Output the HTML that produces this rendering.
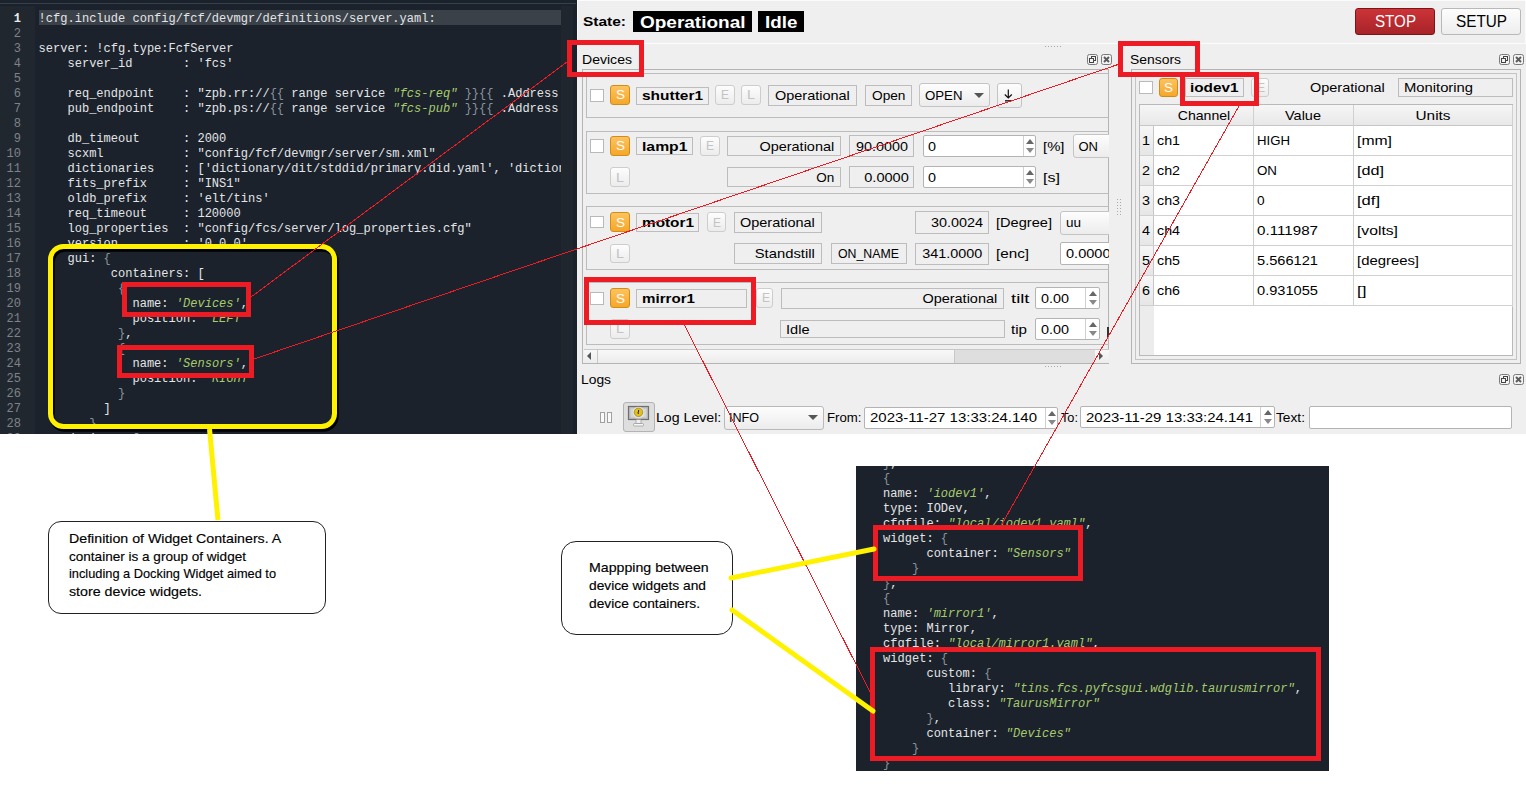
<!DOCTYPE html><html><head><meta charset="utf-8"><style>
html,body{margin:0;padding:0;}
body{width:1526px;height:811px;position:relative;overflow:hidden;background:#fff;font-family:"Liberation Sans", sans-serif;}
div{box-sizing:border-box;}
.code{position:absolute;margin:0;font-family:"Liberation Mono", monospace;font-size:12.04px;line-height:15px;white-space:pre;color:#e3e5e8;}
.p{color:#8a939c;}
.g{color:#a6cb6d;font-style:italic;}
.lbl{position:absolute;border:1px solid #bdbdbd;background:#efefef;}
.btn{position:absolute;border:1px solid #c4c4c4;border-radius:3px;background:linear-gradient(#fdfdfd,#ececec);}
.dis{border-color:#cdcdcd;}
.sbtn{position:absolute;border:1px solid #d08e17;border-radius:3px;background:linear-gradient(#fdc35f,#f5a72a);}
.chk{position:absolute;border:1px solid #b9b9b9;background:#fff;}
.inp{position:absolute;border:1px solid #b4b4b4;border-radius:2px;background:#fff;}
.grp{position:absolute;border:1px solid #bcbcbc;}
</style></head><body>
<div style="position:absolute;left:0px;top:0px;width:577px;height:434px;background:#1b222b;"></div>
<div style="position:absolute;left:0px;top:3px;width:576px;height:1px;background:#34404a;"></div>
<div style="position:absolute;left:0px;top:6px;width:35px;height:428px;background:#21272f;"></div>
<div style="position:absolute;left:561px;top:6px;width:12px;height:428px;background:#20262e;"></div>
<div style="position:absolute;left:39px;top:10px;width:522px;height:15px;background:#3b4148;"></div>
<div style="position:absolute;left:0;top:0;width:35px;height:434px;overflow:hidden;">
<pre class="code" style="left:0;top:12.3px;width:21px;text-align:right;color:#7d838a;"><span style="color:#e8eaec;font-weight:bold;">1</span>
2
3
4
5
6
7
8
9
10
11
12
13
14
15
16
17
18
19
20
21
22
23
24
25
26
27
28
29</pre>
</div>
<div style="position:absolute;left:0;top:0;width:561px;height:434px;overflow:hidden;">
<pre class="code" style="left:38.6px;top:12.3px;">!cfg.include config/fcf/devmgr/definitions/server.yaml:

server: !cfg.type:FcfServer
    server_id       : 'fcs'

    req_endpoint    : "zpb.rr://<span class="p">{{</span> range service <span class="g">"fcs-req"</span> <span class="p">}}{{</span> .Address }}
    pub_endpoint    : "zpb.ps://<span class="p">{{</span> range service <span class="g">"fcs-pub"</span> <span class="p">}}{{</span> .Address }}

    db_timeout      : 2000
    scxml           : "config/fcf/devmgr/server/sm.xml"
    dictionaries    : ['dictionary/dit/stddid/primary.did.yaml', 'dictionary/x']
    fits_prefix     : "INS1"
    oldb_prefix     : 'elt/tins'
    req_timeout     : 120000
    log_properties  : "config/fcs/server/log_properties.cfg"
    version         : '0.0.0'
    gui: <span class="p">{</span>
          containers: [
           <span class="p">{</span>
             name: <span class="g">'Devices'</span>,
             position: <span class="g">'LEFT'</span>
           <span class="p">}</span>,
           <span class="p">{</span>
             name: <span class="g">'Sensors'</span>,
             position: <span class="g">'RIGHT'</span>
           <span class="p">}</span>
         ]
       <span class="p">}</span>
    devices: <span class="p">[</span></pre>
</div>
<div style="position:absolute;left:856px;top:466px;width:473px;height:305px;overflow:hidden;background:#1b222b;">
<pre class="code" style="left:27.1px;top:-9.2px;"><span class="p">}</span>,
<span class="p">{</span>
name: <span class="g">'iodev1'</span>,
type: IODev,
cfgfile: <span class="g">"local/iodev1.yaml"</span>,
widget: <span class="p">{</span>
      container: <span class="g">"Sensors"</span>
    <span class="p">}</span>
<span class="p">}</span>,
<span class="p">{</span>
name: <span class="g">'mirror1'</span>,
type: Mirror,
cfgfile: <span class="g">"local/mirror1.yaml"</span>,
widget: <span class="p">{</span>
      custom: <span class="p">{</span>
         library: <span class="g">"tins.fcs.pyfcsgui.wdglib.taurusmirror"</span>,
         class: <span class="g">"TaurusMirror"</span>
      <span class="p">}</span>,
      container: <span class="g">"Devices"</span>
    <span class="p">}</span>
<span class="p">}</span></pre>
</div>
<div style="position:absolute;left:577px;top:0px;width:949px;height:434px;background:#efefef;"></div>
<div style="position:absolute;left:577px;top:0px;width:949px;height:1px;background:#fbfbfb;"></div>
<div style="position:absolute;left:577px;top:0px;width:1px;height:43px;background:#fbfbfb;"></div>
<div style="position:absolute;left:1525px;top:0px;width:1px;height:43px;background:#fbfbfb;"></div>
<div style="position:absolute;left:577px;top:43px;width:949px;height:1px;background:#fbfbfb;"></div>
<div class="" style="position: absolute; left: 582.5px; top: 15.09px; font-size: 13px; line-height: 13px; white-space: pre; transform-origin: left 50%; font-weight: bold; color: rgb(0, 0, 0); transform: scaleX(1.1903);">State:</div>
<div style="position:absolute;left:633px;top:11px;width:119px;height:21px;background:#000;"></div>
<div class="" style="position: absolute; left: 639.7px; top: 14.21px; font-size: 17px; line-height: 17px; white-space: pre; transform-origin: left 50%; font-weight: bold; color: rgb(255, 255, 255); transform: scaleX(1.1168);">Operational</div>
<div style="position:absolute;left:758px;top:11px;width:46px;height:21px;background:#000;"></div>
<div class="" style="position: absolute; left: 764.8px; top: 14.21px; font-size: 17px; line-height: 17px; white-space: pre; transform-origin: left 50%; font-weight: bold; color: rgb(255, 255, 255); transform: scaleX(1.1059);">Idle</div>
<div style="position:absolute;left:1355px;top:8px;width:80px;height:27px;border:1px solid #7d1418;border-radius:3px;background:linear-gradient(#cc3438,#a82328);"></div>
<div class="" style="position: absolute; left: 1374.5px; top: 13.23px; font-size: 16.5px; line-height: 16.5px; white-space: pre; transform-origin: left 50%; color: rgb(255, 255, 255); transform: scaleX(0.9184);">STOP</div>
<div style="position:absolute;left:1441px;top:8px;width:80px;height:27px;border:1px solid #b8b8b8;border-radius:3px;background:linear-gradient(#fdfdfd,#ededed);"></div>
<div class="" style="position: absolute; left: 1455.6px; top: 13.23px; font-size: 16.5px; line-height: 16.5px; white-space: pre; transform-origin: left 50%; color: rgb(0, 0, 0); transform: scaleX(0.927);">SETUP</div>
<div class="" style="position: absolute; left: 581.5px; top: 52.59px; font-size: 13px; line-height: 13px; white-space: pre; transform-origin: left 50%; color: rgb(0, 0, 0); transform: scaleX(1.0811);">Devices</div>
<svg width="40" height="16" style="position:absolute;left:1085px;top:52px;"><rect x="2.5" y="2.5" width="10" height="10" rx="2" fill="#f2f2f2" stroke="#7a7a7a" stroke-width="1"></rect><rect x="16.5" y="2.5" width="10" height="10" rx="2" fill="#f2f2f2" stroke="#7a7a7a" stroke-width="1"></rect><rect x="6.5" y="4.5" width="4" height="4" fill="none" stroke="#444" stroke-width="1"></rect><rect x="4.5" y="6.5" width="4" height="4" fill="#f2f2f2" stroke="#444" stroke-width="1"></rect><path d="M19,5 L24,10 M24,5 L19,10" stroke="#5a5a5a" stroke-width="1.9"></path></svg>
<div class="" style="position: absolute; left: 1130.3px; top: 53.49px; font-size: 13px; line-height: 13px; white-space: pre; transform-origin: left 50%; color: rgb(0, 0, 0); transform: scaleX(1.0691);">Sensors</div>
<svg width="40" height="16" style="position:absolute;left:1497px;top:52px;"><rect x="2.5" y="2.5" width="10" height="10" rx="2" fill="#f2f2f2" stroke="#7a7a7a" stroke-width="1"></rect><rect x="16.5" y="2.5" width="10" height="10" rx="2" fill="#f2f2f2" stroke="#7a7a7a" stroke-width="1"></rect><rect x="6.5" y="4.5" width="4" height="4" fill="none" stroke="#444" stroke-width="1"></rect><rect x="4.5" y="6.5" width="4" height="4" fill="#f2f2f2" stroke="#444" stroke-width="1"></rect><path d="M19,5 L24,10 M24,5 L19,10" stroke="#5a5a5a" stroke-width="1.9"></path></svg>
<div class="" style="position: absolute; left: 580.8px; top: 373.29px; font-size: 13px; line-height: 13px; white-space: pre; transform-origin: left 50%; color: rgb(0, 0, 0); transform: scaleX(1.0637);">Logs</div>
<svg width="40" height="16" style="position:absolute;left:1497px;top:372px;"><rect x="2.5" y="2.5" width="10" height="10" rx="2" fill="#f2f2f2" stroke="#7a7a7a" stroke-width="1"></rect><rect x="16.5" y="2.5" width="10" height="10" rx="2" fill="#f2f2f2" stroke="#7a7a7a" stroke-width="1"></rect><rect x="6.5" y="4.5" width="4" height="4" fill="none" stroke="#444" stroke-width="1"></rect><rect x="4.5" y="6.5" width="4" height="4" fill="#f2f2f2" stroke="#444" stroke-width="1"></rect><path d="M19,5 L24,10 M24,5 L19,10" stroke="#5a5a5a" stroke-width="1.9"></path></svg>
<div style="position:absolute;left:1045px;top:46px;width:1px;height:1px;background:#a8a8a8;"></div>
<div style="position:absolute;left:1048px;top:46px;width:1px;height:1px;background:#a8a8a8;"></div>
<div style="position:absolute;left:1051px;top:46px;width:1px;height:1px;background:#a8a8a8;"></div>
<div style="position:absolute;left:1054px;top:46px;width:1px;height:1px;background:#a8a8a8;"></div>
<div style="position:absolute;left:1057px;top:46px;width:1px;height:1px;background:#a8a8a8;"></div>
<div style="position:absolute;left:1060px;top:46px;width:1px;height:1px;background:#a8a8a8;"></div>
<div style="position:absolute;left:1045px;top:366px;width:1px;height:1px;background:#a8a8a8;"></div>
<div style="position:absolute;left:1048px;top:366px;width:1px;height:1px;background:#a8a8a8;"></div>
<div style="position:absolute;left:1051px;top:366px;width:1px;height:1px;background:#a8a8a8;"></div>
<div style="position:absolute;left:1054px;top:366px;width:1px;height:1px;background:#a8a8a8;"></div>
<div style="position:absolute;left:1057px;top:366px;width:1px;height:1px;background:#a8a8a8;"></div>
<div style="position:absolute;left:1060px;top:366px;width:1px;height:1px;background:#a8a8a8;"></div>
<div style="position:absolute;left:1117px;top:199px;width:1px;height:1px;background:#a8a8a8;"></div>
<div style="position:absolute;left:1120px;top:199px;width:1px;height:1px;background:#a8a8a8;"></div>
<div style="position:absolute;left:1117px;top:202px;width:1px;height:1px;background:#a8a8a8;"></div>
<div style="position:absolute;left:1120px;top:202px;width:1px;height:1px;background:#a8a8a8;"></div>
<div style="position:absolute;left:1117px;top:205px;width:1px;height:1px;background:#a8a8a8;"></div>
<div style="position:absolute;left:1120px;top:205px;width:1px;height:1px;background:#a8a8a8;"></div>
<div style="position:absolute;left:1117px;top:208px;width:1px;height:1px;background:#a8a8a8;"></div>
<div style="position:absolute;left:1120px;top:208px;width:1px;height:1px;background:#a8a8a8;"></div>
<div style="position:absolute;left:1117px;top:211px;width:1px;height:1px;background:#a8a8a8;"></div>
<div style="position:absolute;left:1120px;top:211px;width:1px;height:1px;background:#a8a8a8;"></div>
<div style="position:absolute;left:1117px;top:214px;width:1px;height:1px;background:#a8a8a8;"></div>
<div style="position:absolute;left:1120px;top:214px;width:1px;height:1px;background:#a8a8a8;"></div>
<div style="position:absolute;left:582px;top:69px;width:527px;height:295px;border:1px solid #b4b4b4;"></div>
<div style="position:absolute;left:583.5px;top:70.5px;width:525px;height:278px;overflow:hidden;">
<div class="grp" style="left:2.5px;top:2.5px;width:540.0px;height:45.0px;"></div>
<div class="grp" style="left:2.5px;top:60.1px;width:540.0px;height:63.4px;"></div>
<div class="grp" style="left:2.5px;top:135.5px;width:540.0px;height:63.5px;"></div>
<div class="grp" style="left:2.5px;top:211.9px;width:540.0px;height:62.9px;"></div>
<div class="chk" style="left:6.9px;top:18.0px;width:13.4px;height:13.1px;"></div>
<div class="sbtn" style="left:26.5px;top:14.5px;width:20.0px;height:20.0px;"></div>
<div class="" style="position: absolute; left: 32px; top: 17.99px; font-size: 13px; line-height: 13px; white-space: pre; transform-origin: left 50%; color: rgb(255, 255, 255); transform: scaleX(1.0378);">S</div>
<div class="lbl" style="left:52.8px;top:16.1px;width:72.4px;height:18.0px;"></div>
<div class="" style="position: absolute; left: 58px; top: 18.79px; font-size: 13px; line-height: 13px; white-space: pre; transform-origin: left 50%; font-weight: bold; transform: scaleX(1.1892);">shutter1</div>
<div class="btn dis" style="left:131.9px;top:14.7px;width:19.5px;height:19.6px;"></div>
<div class="" style="position: absolute; left: 137.9px; top: 17.99px; font-size: 13px; line-height: 13px; white-space: pre; transform-origin: left 50%; color: rgb(195, 195, 195); transform: scaleX(0.9225);">E</div>
<div class="btn dis" style="left:157.6px;top:14.7px;width:19.5px;height:19.6px;"></div>
<div class="" style="position: absolute; left: 163.6px; top: 17.99px; font-size: 13px; line-height: 13px; white-space: pre; transform-origin: left 50%; color: rgb(195, 195, 195); transform: scaleX(1.1058);">L</div>
<div class="lbl" style="left:184.7px;top:14.0px;width:88.6px;height:21.2px;"></div>
<div class="" style="position: absolute; left: 191.5px; top: 18.79px; font-size: 13px; line-height: 13px; white-space: pre; transform-origin: left 50%; transform: scaleX(1.1128);">Operational</div>
<div class="lbl" style="left:281.8px;top:14.0px;width:46.5px;height:21.2px;"></div>
<div class="" style="position: absolute; left: 288px; top: 18.79px; font-size: 13px; line-height: 13px; white-space: pre; transform-origin: left 50%; transform: scaleX(1.053);">Open</div>
<div class="btn" style="left:335.9px;top:12.5px;width:71.0px;height:24.4px;"></div>
<div class="" style="position: absolute; left: 341px; top: 18.79px; font-size: 13px; line-height: 13px; white-space: pre; transform-origin: left 50%; transform: scaleX(1.0178);">OPEN</div>
<div style="position:absolute;left:390.1px;top:22.0px;width:0;height:0;border-left:5px solid transparent;border-right:5px solid transparent;border-top:5px solid #555;"></div>
<div class="btn" style="left:413.9px;top:12.8px;width:24.3px;height:24.4px;"></div>
<svg width="14" height="16" style="position:absolute;left:417.5px;top:17.5px;"><path d="M7.3,1.5 V10 M3.8,6.5 L7.3,10 L10.8,6.5" stroke="#111" stroke-width="1.2" fill="none"></path><rect x="4" y="12" width="6.5" height="1.6" fill="#333"></rect></svg>
<div class="chk" style="left:6.9px;top:68.8px;width:13.4px;height:13.4px;"></div>
<div class="sbtn" style="left:26.5px;top:65.5px;width:20.0px;height:20.0px;"></div>
<div class="" style="position: absolute; left: 32px; top: 68.99px; font-size: 13px; line-height: 13px; white-space: pre; transform-origin: left 50%; color: rgb(255, 255, 255); transform: scaleX(1.0378);">S</div>
<div class="lbl" style="left:52.8px;top:66.9px;width:57.1px;height:18.0px;"></div>
<div class="" style="position: absolute; left: 58px; top: 69.79px; font-size: 13px; line-height: 13px; white-space: pre; transform-origin: left 50%; font-weight: bold; transform: scaleX(1.2108);">lamp1</div>
<div class="btn dis" style="left:116.9px;top:65.5px;width:19.5px;height:19.6px;"></div>
<div class="" style="position: absolute; left: 122.9px; top: 68.79px; font-size: 13px; line-height: 13px; white-space: pre; transform-origin: left 50%; color: rgb(195, 195, 195); transform: scaleX(0.9225);">E</div>
<div class="lbl" style="left:143.9px;top:65.5px;width:113.2px;height:20.3px;"></div>
<div class="" style="position: absolute; right: 274.2px; top: 69.79px; font-size: 13px; line-height: 13px; white-space: pre; transform-origin: right 50%; transform: scaleX(1.1128);">Operational</div>
<div class="lbl" style="left:265.7px;top:64.7px;width:65.1px;height:22.0px;"></div>
<div class="" style="position: absolute; right: 200.2px; top: 69.79px; font-size: 13px; line-height: 13px; white-space: pre; transform-origin: right 50%; transform: scaleX(1.1064);">90.0000</div>
<div class="inp" style="left:339.1px;top:64.7px;width:113.7px;height:22.0px;"></div>
<div class="" style="position: absolute; left: 344px; top: 69.79px; font-size: 13px; line-height: 13px; white-space: pre; transform-origin: left 50%; transform: scaleX(1.1058);">0</div>
<div class="" style="left:439.1px;top:65.7px;width:1.0px;height:20.0px;position:absolute;background:#d0d0d0;"></div>
<div class="btn" style="left:489.2px;top:63.8px;width:60.0px;height:23.9px;"></div>
<div class="" style="position: absolute; left: 495px; top: 69.79px; font-size: 13px; line-height: 13px; white-space: pre; transform-origin: left 50%; transform: scaleX(1);">ON</div>
<div class="" style="position: absolute; left: 459.8px; top: 69.79px; font-size: 13px; line-height: 13px; white-space: pre; transform-origin: left 50%; transform: scaleX(1.1438);">[%]</div>
<div class="btn dis" style="left:26.5px;top:96.8px;width:19.5px;height:19.6px;"></div>
<div class="" style="position: absolute; left: 32.5px; top: 100.09px; font-size: 13px; line-height: 13px; white-space: pre; transform-origin: left 50%; color: rgb(195, 195, 195); transform: scaleX(1.1058);">L</div>
<div class="lbl" style="left:143.9px;top:96.8px;width:113.2px;height:20.2px;"></div>
<div class="" style="position: absolute; right: 274.2px; top: 100.79px; font-size: 13px; line-height: 13px; white-space: pre; transform-origin: right 50%; transform: scaleX(1.0378);">On</div>
<div class="lbl" style="left:265.7px;top:95.9px;width:65.1px;height:22.0px;"></div>
<div class="" style="position: absolute; right: 200.2px; top: 100.79px; font-size: 13px; line-height: 13px; white-space: pre; transform-origin: right 50%; transform: scaleX(1.1191);">0.0000</div>
<div class="inp" style="left:339.1px;top:95.9px;width:113.7px;height:22.0px;"></div>
<div class="" style="position: absolute; left: 344px; top: 100.79px; font-size: 13px; line-height: 13px; white-space: pre; transform-origin: left 50%; transform: scaleX(1.1058);">0</div>
<div class="" style="left:439.1px;top:96.9px;width:1.0px;height:20.0px;position:absolute;background:#d0d0d0;"></div>
<div class="" style="position: absolute; left: 459.8px; top: 100.79px; font-size: 13px; line-height: 13px; white-space: pre; transform-origin: left 50%; transform: scaleX(1.2378);">[s]</div>
<div class="chk" style="left:6.9px;top:145.0px;width:13.4px;height:12.9px;"></div>
<div class="sbtn" style="left:26.5px;top:141.8px;width:20.0px;height:20.0px;"></div>
<div class="" style="position: absolute; left: 32px; top: 145.29px; font-size: 13px; line-height: 13px; white-space: pre; transform-origin: left 50%; color: rgb(255, 255, 255); transform: scaleX(1.0378);">S</div>
<div class="lbl" style="left:52.9px;top:142.8px;width:63.0px;height:18.4px;"></div>
<div class="" style="position: absolute; left: 58px; top: 145.79px; font-size: 13px; line-height: 13px; white-space: pre; transform-origin: left 50%; font-weight: bold; transform: scaleX(1.1801);">motor1</div>
<div class="btn dis" style="left:123.0px;top:141.8px;width:19.5px;height:19.6px;"></div>
<div class="" style="position: absolute; left: 129px; top: 145.09px; font-size: 13px; line-height: 13px; white-space: pre; transform-origin: left 50%; color: rgb(195, 195, 195); transform: scaleX(0.9225);">E</div>
<div class="lbl" style="left:150.0px;top:141.8px;width:88.0px;height:20.4px;"></div>
<div class="" style="position: absolute; left: 156.5px; top: 145.79px; font-size: 13px; line-height: 13px; white-space: pre; transform-origin: left 50%; transform: scaleX(1.1128);">Operational</div>
<div class="lbl" style="left:331.6px;top:140.7px;width:73.8px;height:22.6px;"></div>
<div class="" style="position: absolute; right: 126px; top: 145.79px; font-size: 13px; line-height: 13px; white-space: pre; transform-origin: right 50%; transform: scaleX(1.1064);">30.0024</div>
<div class="" style="position: absolute; left: 412.3px; top: 145.79px; font-size: 13px; line-height: 13px; white-space: pre; transform-origin: left 50%; transform: scaleX(1.1228);">[Degree]</div>
<div class="btn" style="left:476.6px;top:140.0px;width:60.0px;height:24.0px;"></div>
<div class="" style="position: absolute; left: 482px; top: 145.79px; font-size: 13px; line-height: 13px; white-space: pre; transform-origin: left 50%; transform: scaleX(1.0367);">uu</div>
<div class="btn dis" style="left:26.5px;top:173.0px;width:19.5px;height:19.6px;"></div>
<div class="" style="position: absolute; left: 32.5px; top: 176.29px; font-size: 13px; line-height: 13px; white-space: pre; transform-origin: left 50%; color: rgb(195, 195, 195); transform: scaleX(1.1058);">L</div>
<div class="lbl" style="left:150.0px;top:172.6px;width:88.0px;height:20.5px;"></div>
<div class="" style="position: absolute; right: 293.5px; top: 176.79px; font-size: 13px; line-height: 13px; white-space: pre; transform-origin: right 50%; transform: scaleX(1.1374);">Standstill</div>
<div class="lbl" style="left:247.0px;top:172.6px;width:76.0px;height:20.5px;"></div>
<div class="" style="position: absolute; left: 254.5px; top: 176.79px; font-size: 13px; line-height: 13px; white-space: pre; transform-origin: left 50%; transform: scaleX(0.9487);">ON_NAME</div>
<div class="lbl" style="left:331.6px;top:172.0px;width:73.8px;height:22.0px;"></div>
<div class="" style="position: absolute; right: 126px; top: 176.79px; font-size: 13px; line-height: 13px; white-space: pre; transform-origin: right 50%; transform: scaleX(1.1063);">341.0000</div>
<div class="" style="position: absolute; left: 412.3px; top: 176.79px; font-size: 13px; line-height: 13px; white-space: pre; transform-origin: left 50%; transform: scaleX(1.1707);">[enc]</div>
<div class="inp" style="left:476.5px;top:171.5px;width:60.0px;height:22.5px;"></div>
<div class="" style="position: absolute; left: 482px; top: 176.79px; font-size: 13px; line-height: 13px; white-space: pre; transform-origin: left 50%; transform: scaleX(1.1191);">0.0000</div>
<div class="chk" style="left:6.9px;top:221.5px;width:13.4px;height:12.6px;"></div>
<div class="sbtn" style="left:26.5px;top:217.7px;width:20.0px;height:20.0px;"></div>
<div class="" style="position: absolute; left: 32px; top: 221.19px; font-size: 13px; line-height: 13px; white-space: pre; transform-origin: left 50%; color: rgb(255, 255, 255); transform: scaleX(1.0378);">S</div>
<div class="lbl" style="left:52.9px;top:218.8px;width:111.1px;height:18.3px;"></div>
<div class="" style="position: absolute; left: 58px; top: 221.79px; font-size: 13px; line-height: 13px; white-space: pre; transform-origin: left 50%; font-weight: bold; transform: scaleX(1.164);">mirror1</div>
<div class="btn dis" style="left:172.6px;top:217.7px;width:17.3px;height:19.6px;"></div>
<div class="" style="position: absolute; left: 178.6px; top: 220.99px; font-size: 13px; line-height: 13px; white-space: pre; transform-origin: left 50%; color: rgb(195, 195, 195); transform: scaleX(0.9225);">E</div>
<div class="lbl" style="left:197.4px;top:217.7px;width:222.7px;height:20.5px;"></div>
<div class="" style="position: absolute; right: 111.5px; top: 221.79px; font-size: 13px; line-height: 13px; white-space: pre; transform-origin: right 50%; transform: scaleX(1.1128);">Operational</div>
<div class="" style="position: absolute; left: 427.6px; top: 221.79px; font-size: 13px; line-height: 13px; white-space: pre; transform-origin: left 50%; transform: scaleX(1.4231);">tilt</div>
<div class="inp" style="left:451.8px;top:216.9px;width:64.3px;height:22.0px;"></div>
<div class="" style="position: absolute; left: 457px; top: 221.79px; font-size: 13px; line-height: 13px; white-space: pre; transform-origin: left 50%; transform: scaleX(1.1062);">0.00</div>
<div class="" style="left:501.9px;top:217.9px;width:1.0px;height:20.0px;position:absolute;background:#d0d0d0;"></div>
<div class="btn dis" style="left:26.5px;top:248.5px;width:19.5px;height:19.6px;"></div>
<div class="" style="position: absolute; left: 32.5px; top: 251.79px; font-size: 13px; line-height: 13px; white-space: pre; transform-origin: left 50%; color: rgb(195, 195, 195); transform: scaleX(1.1058);">L</div>
<div class="lbl" style="left:196.8px;top:249.6px;width:224.4px;height:18.3px;"></div>
<div class="" style="position: absolute; left: 202.5px; top: 252.79px; font-size: 13px; line-height: 13px; white-space: pre; transform-origin: left 50%; transform: scaleX(1.1207);">Idle</div>
<div class="" style="position: absolute; left: 427.6px; top: 252.79px; font-size: 13px; line-height: 13px; white-space: pre; transform-origin: left 50%; transform: scaleX(1.165);">tip</div>
<div class="inp" style="left:451.8px;top:247.9px;width:64.3px;height:21.8px;"></div>
<div class="" style="position: absolute; left: 457px; top: 252.79px; font-size: 13px; line-height: 13px; white-space: pre; transform-origin: left 50%; transform: scaleX(1.1062);">0.00</div>
<div class="" style="left:501.9px;top:248.9px;width:1.0px;height:20.0px;position:absolute;background:#d0d0d0;"></div>
<div class="" style="left:523.5px;top:256.5px;width:2.0px;height:9.5px;position:absolute;background:#333;"></div>
</div>
<div style="position:absolute;left:583.5px;top:349px;width:525px;height:14.3px;background:linear-gradient(#f8f8f8,#ececec);border-top:1px solid #c8c8c8;"></div>
<div style="position:absolute;left:596.5px;top:349px;width:1px;height:14.3px;background:#c8c8c8;"></div>
<div style="position:absolute;left:954.4px;top:350px;width:140.2px;height:13.3px;background:#dedede;border-left:1px solid #c8c8c8;"></div>
<div style="position:absolute;left:587px;top:352px;width:0;height:0;border-top:4px solid transparent;border-bottom:4px solid transparent;border-right:4px solid #555;"></div>
<div style="position:absolute;left:1099px;top:352px;width:0;height:0;border-top:4px solid transparent;border-bottom:4px solid transparent;border-left:4px solid #555;"></div>
<div style="position:absolute;left:1131px;top:69px;width:390px;height:295px;border:1px solid #b4b4b4;"></div>
<div style="position:absolute;left:1135px;top:73px;width:382px;height:287px;border:1px solid #c4c4c4;"></div>
<div style="position:absolute;left:1139.1px;top:81px;width:13.8px;height:12.6px;border:1px solid #b9b9b9;background:#fff;"></div>
<div style="position:absolute;left:1159px;top:78.3px;width:19.1px;height:19.2px;border:1px solid #d08e17;border-radius:3px;background:linear-gradient(#fdc35f,#f5a72a);"></div>
<div class="" style="position: absolute; left: 1164px; top: 81.29px; font-size: 13px; line-height: 13px; white-space: pre; transform-origin: left 50%; color: rgb(255, 255, 255); transform: scaleX(1.0378);">S</div>
<div style="position:absolute;left:1185px;top:78px;width:58.6px;height:18.6px;border:1px solid #bdbdbd;background:#efefef;"></div>
<div class="" style="position: absolute; left: 1190px; top: 81.29px; font-size: 13px; line-height: 13px; white-space: pre; transform-origin: left 50%; font-weight: bold; transform: scaleX(1.1775);">iodev1</div>
<div style="position:absolute;left:1250.5px;top:77.5px;width:18.3px;height:19.1px;border:1px solid #cdcdcd;border-radius:3px;background:linear-gradient(#fdfdfd,#ececec);"></div>
<div class="" style="position: absolute; left: 1256.5px; top: 81.29px; font-size: 13px; line-height: 13px; white-space: pre; transform-origin: left 50%; color: rgb(195, 195, 195); transform: scaleX(0.9225);">E</div>
<div class="" style="position: absolute; left: 1310px; top: 81.29px; font-size: 13px; line-height: 13px; white-space: pre; transform-origin: left 50%; transform: scaleX(1.1128);">Operational</div>
<div style="position:absolute;left:1398.3px;top:78.3px;width:114.3px;height:18.4px;border:1px solid #bdbdbd;background:#efefef;"></div>
<div class="" style="position: absolute; left: 1403.5px; top: 81.29px; font-size: 13px; line-height: 13px; white-space: pre; transform-origin: left 50%; transform: scaleX(1.1367);">Monitoring</div>
<div style="position:absolute;left:1139px;top:104px;width:373.5999999999999px;height:252px;border:1px solid #b9b9b9;background:#fff;"></div>
<div style="position:absolute;left:1140px;top:105px;width:371.5999999999999px;height:21px;background:linear-gradient(#f6f6f6,#e8e8e8);border-bottom:1px solid #c6c6c6;"></div>
<div style="position:absolute;left:1140px;top:126px;width:13.599999999999909px;height:229px;background:#ececec;"></div>
<div style="position:absolute;left:1253.4px;top:105px;width:1px;height:200.8px;background:#d0d0d0;"></div>
<div style="position:absolute;left:1353.2px;top:105px;width:1px;height:200.8px;background:#d0d0d0;"></div>
<div style="position:absolute;left:1153px;top:126px;width:1px;height:180px;background:#c6c6c6;"></div>
<div style="position:absolute;left:1511.6px;top:105px;width:1px;height:201.8px;background:#d0d0d0;"></div>
<div class="" style="position: absolute; left: 1144px; top: 109.29px; width: 120px; text-align: center; font-size: 13px; line-height: 13px; white-space: pre; transform-origin: center 50%; transform: scaleX(1.0839);"><span>Channel</span></div>
<div class="" style="position: absolute; left: 1243.3px; top: 109.29px; width: 120px; text-align: center; font-size: 13px; line-height: 13px; white-space: pre; transform-origin: center 50%; transform: scaleX(1.1147);"><span>Value</span></div>
<div class="" style="position: absolute; left: 1372.9px; top: 109.29px; width: 120px; text-align: center; font-size: 13px; line-height: 13px; white-space: pre; transform-origin: center 50%; transform: scaleX(1.1814);"><span>Units</span></div>
<div style="position:absolute;left:1140px;top:155px;width:371.5999999999999px;height:1px;background:#d0d0d0;"></div>
<div style="position:absolute;left:1140px;top:126px;width:13px;height:29px;background:linear-gradient(#f6f6f6,#e6e6e6);"></div>
<div class="" style="position: absolute; left: 1142px; top: 134.49px; font-size: 13px; line-height: 13px; white-space: pre; transform-origin: left 50%; transform: scaleX(1.1058);">1</div>
<div class="" style="position: absolute; left: 1157px; top: 134.49px; font-size: 13px; line-height: 13px; white-space: pre; transform-origin: left 50%; transform: scaleX(1.0969);">ch1</div>
<div class="" style="position: absolute; left: 1257px; top: 134.49px; font-size: 13px; line-height: 13px; white-space: pre; transform-origin: left 50%; transform: scaleX(1.0154);">HIGH</div>
<div class="" style="position: absolute; left: 1357px; top: 134.49px; font-size: 13px; line-height: 13px; white-space: pre; transform-origin: left 50%; transform: scaleX(1.2115);">[mm]</div>
<div style="position:absolute;left:1140px;top:185px;width:371.5999999999999px;height:1px;background:#d0d0d0;"></div>
<div style="position:absolute;left:1140px;top:156px;width:13px;height:29px;background:linear-gradient(#f6f6f6,#e6e6e6);"></div>
<div class="" style="position: absolute; left: 1142px; top: 164.49px; font-size: 13px; line-height: 13px; white-space: pre; transform-origin: left 50%; transform: scaleX(1.1058);">2</div>
<div class="" style="position: absolute; left: 1157px; top: 164.49px; font-size: 13px; line-height: 13px; white-space: pre; transform-origin: left 50%; transform: scaleX(1.0969);">ch2</div>
<div class="" style="position: absolute; left: 1257px; top: 164.49px; font-size: 13px; line-height: 13px; white-space: pre; transform-origin: left 50%; transform: scaleX(1.0256);">ON</div>
<div class="" style="position: absolute; left: 1357px; top: 164.49px; font-size: 13px; line-height: 13px; white-space: pre; transform-origin: left 50%; transform: scaleX(1.245);">[dd]</div>
<div style="position:absolute;left:1140px;top:215px;width:371.5999999999999px;height:1px;background:#d0d0d0;"></div>
<div style="position:absolute;left:1140px;top:186px;width:13px;height:29px;background:linear-gradient(#f6f6f6,#e6e6e6);"></div>
<div class="" style="position: absolute; left: 1142px; top: 194.49px; font-size: 13px; line-height: 13px; white-space: pre; transform-origin: left 50%; transform: scaleX(1.1058);">3</div>
<div class="" style="position: absolute; left: 1157px; top: 194.49px; font-size: 13px; line-height: 13px; white-space: pre; transform-origin: left 50%; transform: scaleX(1.0969);">ch3</div>
<div class="" style="position: absolute; left: 1257px; top: 194.49px; font-size: 13px; line-height: 13px; white-space: pre; transform-origin: left 50%; transform: scaleX(1.0505);">0</div>
<div class="" style="position: absolute; left: 1357px; top: 194.49px; font-size: 13px; line-height: 13px; white-space: pre; transform-origin: left 50%; transform: scaleX(1.2723);">[df]</div>
<div style="position:absolute;left:1140px;top:245px;width:371.5999999999999px;height:1px;background:#d0d0d0;"></div>
<div style="position:absolute;left:1140px;top:216px;width:13px;height:29px;background:linear-gradient(#f6f6f6,#e6e6e6);"></div>
<div class="" style="position: absolute; left: 1142px; top: 224.49px; font-size: 13px; line-height: 13px; white-space: pre; transform-origin: left 50%; transform: scaleX(1.1058);">4</div>
<div class="" style="position: absolute; left: 1157px; top: 224.49px; font-size: 13px; line-height: 13px; white-space: pre; transform-origin: left 50%; transform: scaleX(1.0969);">ch4</div>
<div class="" style="position: absolute; left: 1257px; top: 224.49px; font-size: 13px; line-height: 13px; white-space: pre; transform-origin: left 50%; transform: scaleX(1.1664);">0.111987</div>
<div class="" style="position: absolute; left: 1357px; top: 224.49px; font-size: 13px; line-height: 13px; white-space: pre; transform-origin: left 50%; transform: scaleX(1.207);">[volts]</div>
<div style="position:absolute;left:1140px;top:275px;width:371.5999999999999px;height:1px;background:#d0d0d0;"></div>
<div style="position:absolute;left:1140px;top:246px;width:13px;height:29px;background:linear-gradient(#f6f6f6,#e6e6e6);"></div>
<div class="" style="position: absolute; left: 1142px; top: 254.49px; font-size: 13px; line-height: 13px; white-space: pre; transform-origin: left 50%; transform: scaleX(1.1058);">5</div>
<div class="" style="position: absolute; left: 1157px; top: 254.49px; font-size: 13px; line-height: 13px; white-space: pre; transform-origin: left 50%; transform: scaleX(1.0969);">ch5</div>
<div class="" style="position: absolute; left: 1257px; top: 254.49px; font-size: 13px; line-height: 13px; white-space: pre; transform-origin: left 50%; transform: scaleX(1.1247);">5.566121</div>
<div class="" style="position: absolute; left: 1357px; top: 254.49px; font-size: 13px; line-height: 13px; white-space: pre; transform-origin: left 50%; transform: scaleX(1.1438);">[degrees]</div>
<div style="position:absolute;left:1140px;top:305px;width:371.5999999999999px;height:1px;background:#d0d0d0;"></div>
<div style="position:absolute;left:1140px;top:276px;width:13px;height:29px;background:linear-gradient(#f6f6f6,#e6e6e6);"></div>
<div class="" style="position: absolute; left: 1142px; top: 284.49px; font-size: 13px; line-height: 13px; white-space: pre; transform-origin: left 50%; transform: scaleX(1.1058);">6</div>
<div class="" style="position: absolute; left: 1157px; top: 284.49px; font-size: 13px; line-height: 13px; white-space: pre; transform-origin: left 50%; transform: scaleX(1.0969);">ch6</div>
<div class="" style="position: absolute; left: 1257px; top: 284.49px; font-size: 13px; line-height: 13px; white-space: pre; transform-origin: left 50%; transform: scaleX(1.1247);">0.931055</div>
<div class="" style="position: absolute; left: 1357px; top: 284.49px; font-size: 13px; line-height: 13px; white-space: pre; transform-origin: left 50%; transform: scaleX(1.3132);">[]</div>
<div style="position:absolute;left:600px;top:411.5px;width:4.5px;height:11.5px;border:1px solid #a0a0a0;background:#fafafa;"></div>
<div style="position:absolute;left:607px;top:411.5px;width:4.5px;height:11.5px;border:1px solid #a0a0a0;background:#fafafa;"></div>
<div style="position:absolute;left:623.2px;top:401.9px;width:32px;height:30.5px;border:1px solid #b3b3b3;border-radius:3px;background:#dedede;"></div>
<svg width="26" height="24" style="position:absolute;left:626px;top:404px;"><rect x="2.5" y="2.5" width="20" height="13" fill="#bdbdbd" stroke="#6e6e6e" stroke-width="1.2"></rect><rect x="4.5" y="4.5" width="16" height="9" fill="#d6d6d6"></rect><circle cx="12.5" cy="8.5" r="5.8" fill="#e6e6e6"></circle><circle cx="12.5" cy="8.3" r="4.3" fill="#e2bf1c" stroke="#8a7410" stroke-width="0.6"></circle><path d="M12,6 q1.5,0.5 0.3,2 q-1,1.2 0.5,2" stroke="#222" stroke-width="1" fill="none"></path><rect x="10" y="15.5" width="5" height="4" fill="#f0f0f0" stroke="#888" stroke-width="0.6"></rect><rect x="7.5" y="19.5" width="10" height="2.5" rx="1" fill="#f6f6f6" stroke="#888" stroke-width="0.6"></rect></svg>
<div class="" style="position: absolute; left: 656.1px; top: 410.99px; font-size: 13px; line-height: 13px; white-space: pre; transform-origin: left 50%; transform: scaleX(1.0883);">Log Level:</div>
<div style="position:absolute;left:723.6px;top:405.7px;width:100.9px;height:24.2px;border:1px solid #b9b9b9;border-radius:3px;background:linear-gradient(#fdfdfd,#ececec);"></div>
<div class="" style="position: absolute; left: 729px; top: 410.99px; font-size: 13px; line-height: 13px; white-space: pre; transform-origin: left 50%; transform: scaleX(0.9658);">INFO</div>
<div style="position:absolute;left:808px;top:415px;width:0;height:0;border-left:5px solid transparent;border-right:5px solid transparent;border-top:5px solid #555;"></div>
<div class="" style="position: absolute; left: 826.7px; top: 410.99px; font-size: 13px; line-height: 13px; white-space: pre; transform-origin: left 50%; transform: scaleX(1.0161);">From:</div>
<div style="position:absolute;left:864.3px;top:406.6px;width:194.2px;height:22.4px;border:1px solid #b4b4b4;border-radius:2px;background:#fff;"></div>
<div style="position:absolute;left:1044.5px;top:407.6px;width:1px;height:20.4px;background:#d0d0d0;"></div>
<div class="" style="position: absolute; left: 869.5px; top: 410.99px; font-size: 13px; line-height: 13px; white-space: pre; transform-origin: left 50%; transform: scaleX(1.1512);">2023-11-27 13:33:24.140</div>
<div class="" style="position: absolute; left: 1060.7px; top: 410.99px; font-size: 13px; line-height: 13px; white-space: pre; transform-origin: left 50%; transform: scaleX(0.9802);">To:</div>
<div style="position:absolute;left:1080.4px;top:406.2px;width:194.3px;height:22.3px;border:1px solid #b4b4b4;border-radius:2px;background:#fff;"></div>
<div style="position:absolute;left:1260.4px;top:407.2px;width:1px;height:20.3px;background:#d0d0d0;"></div>
<div class="" style="position: absolute; left: 1085.5px; top: 410.99px; font-size: 13px; line-height: 13px; white-space: pre; transform-origin: left 50%; transform: scaleX(1.1512);">2023-11-29 13:33:24.141</div>
<div class="" style="position: absolute; left: 1276.3px; top: 410.99px; font-size: 13px; line-height: 13px; white-space: pre; transform-origin: left 50%; transform: scaleX(1.0557);">Text:</div>
<div style="position:absolute;left:1308.5px;top:405.5px;width:203.8px;height:23.9px;border:1px solid #b4b4b4;border-radius:2px;background:#fff;"></div>
<div style="position:absolute;left:1047.5px;top:410.8px;width:0;height:0;border-left:4px solid transparent;border-right:4px solid transparent;border-bottom:5px solid #666;"></div>
<div style="position:absolute;left:1047.5px;top:419.8px;width:0;height:0;border-left:4px solid transparent;border-right:4px solid transparent;border-top:5px solid #888;"></div>
<div style="position:absolute;left:1263.5px;top:410.3px;width:0;height:0;border-left:4px solid transparent;border-right:4px solid transparent;border-bottom:5px solid #666;"></div>
<div style="position:absolute;left:1263.5px;top:419.3px;width:0;height:0;border-left:4px solid transparent;border-right:4px solid transparent;border-top:5px solid #888;"></div>
<div style="position:absolute;left:1025.5px;top:139.2px;width:0;height:0;border-left:4px solid transparent;border-right:4px solid transparent;border-bottom:5px solid #666;"></div>
<div style="position:absolute;left:1025.5px;top:148.2px;width:0;height:0;border-left:4px solid transparent;border-right:4px solid transparent;border-top:5px solid #888;"></div>
<div style="position:absolute;left:1025.5px;top:170.4px;width:0;height:0;border-left:4px solid transparent;border-right:4px solid transparent;border-bottom:5px solid #666;"></div>
<div style="position:absolute;left:1025.5px;top:179.4px;width:0;height:0;border-left:4px solid transparent;border-right:4px solid transparent;border-top:5px solid #888;"></div>
<div style="position:absolute;left:1088.5px;top:291.4px;width:0;height:0;border-left:4px solid transparent;border-right:4px solid transparent;border-bottom:5px solid #666;"></div>
<div style="position:absolute;left:1088.5px;top:300.4px;width:0;height:0;border-left:4px solid transparent;border-right:4px solid transparent;border-top:5px solid #888;"></div>
<div style="position:absolute;left:1088.5px;top:322.3px;width:0;height:0;border-left:4px solid transparent;border-right:4px solid transparent;border-bottom:5px solid #666;"></div>
<div style="position:absolute;left:1088.5px;top:331.3px;width:0;height:0;border-left:4px solid transparent;border-right:4px solid transparent;border-top:5px solid #888;"></div>
<div style="position:absolute;left:48px;top:521px;width:278px;height:93px;border:1px solid #222;border-radius:13px;background:#fff;"></div>
<div class="" style="position: absolute; left: 69.2px; top: 531.82px; font-size: 13.2px; line-height: 13.2px; white-space: pre; transform-origin: left 50%; color: rgb(0, 0, 0); -webkit-text-stroke: 0.15px rgb(0, 0, 0); transform: scaleX(1.0766);">Definition of Widget Containers. A</div>
<div class="" style="position: absolute; left: 69.2px; top: 549.52px; font-size: 13.2px; line-height: 13.2px; white-space: pre; transform-origin: left 50%; color: rgb(0, 0, 0); -webkit-text-stroke: 0.15px rgb(0, 0, 0); transform: scaleX(1.0274);">container is a group of widget</div>
<div class="" style="position: absolute; left: 69.2px; top: 567.22px; font-size: 13.2px; line-height: 13.2px; white-space: pre; transform-origin: left 50%; color: rgb(0, 0, 0); -webkit-text-stroke: 0.15px rgb(0, 0, 0); transform: scaleX(0.9704);">including a Docking Widget aimed to</div>
<div class="" style="position: absolute; left: 69.2px; top: 584.92px; font-size: 13.2px; line-height: 13.2px; white-space: pre; transform-origin: left 50%; color: rgb(0, 0, 0); -webkit-text-stroke: 0.15px rgb(0, 0, 0); transform: scaleX(1.0799);">store device widgets.</div>
<div style="position:absolute;left:561px;top:541px;width:172px;height:94px;border:1px solid #222;border-radius:15px;background:#fff;"></div>
<div class="" style="position: absolute; left: 589.4px; top: 560.92px; font-size: 13.2px; line-height: 13.2px; white-space: pre; transform-origin: left 50%; color: rgb(0, 0, 0); -webkit-text-stroke: 0.15px rgb(0, 0, 0); transform: scaleX(1.074);">Mappping between</div>
<div class="" style="position: absolute; left: 589.4px; top: 578.72px; font-size: 13.2px; line-height: 13.2px; white-space: pre; transform-origin: left 50%; color: rgb(0, 0, 0); -webkit-text-stroke: 0.15px rgb(0, 0, 0); transform: scaleX(1.043);">device widgets and</div>
<div class="" style="position: absolute; left: 589.4px; top: 596.52px; font-size: 13.2px; line-height: 13.2px; white-space: pre; transform-origin: left 50%; color: rgb(0, 0, 0); -webkit-text-stroke: 0.15px rgb(0, 0, 0); transform: scaleX(1.0442);">device containers.</div>
<svg width="1526" height="811" style="position:absolute;left:0;top:0;">
<rect shape-rendering="crispEdges" x="124.5" y="284.5" width="124" height="30" fill="none" stroke="#ed1c24" stroke-width="5"></rect>
<rect shape-rendering="crispEdges" x="119.5" y="347.5" width="132" height="28" fill="none" stroke="#ed1c24" stroke-width="5"></rect>
<rect shape-rendering="crispEdges" x="569.5" y="42.5" width="72" height="32" fill="none" stroke="#ed1c24" stroke-width="5"></rect>
<rect shape-rendering="crispEdges" x="1120.5" y="43.5" width="77" height="30.5" fill="none" stroke="#ed1c24" stroke-width="5"></rect>
<rect shape-rendering="crispEdges" x="586.5" y="279.5" width="167" height="43" fill="none" stroke="#ed1c24" stroke-width="5"></rect>
<rect shape-rendering="crispEdges" x="875.5" y="527.5" width="205" height="51" fill="none" stroke="#ed1c24" stroke-width="5"></rect>
<rect shape-rendering="crispEdges" x="872.5" y="649.5" width="446" height="109" fill="none" stroke="#ed1c24" stroke-width="5"></rect>
<rect shape-rendering="crispEdges" x="1182.5" y="74.5" width="73.5" height="28.700000000000003" fill="none" stroke="#ed1c24" stroke-width="5"></rect>
<rect x="52" y="249" width="284" height="180" rx="13" ry="13" fill="none" stroke="#000" stroke-width="5.5"></rect>
<rect x="50.5" y="246.5" width="284" height="180" rx="13" ry="13" fill="none" stroke="#fff200" stroke-width="5"></rect>
<line x1="251" y1="297" x2="567" y2="62" stroke="#ed1c24" stroke-width="1" stroke-linecap="butt" shape-rendering="crispEdges"></line>
<line x1="254" y1="359" x2="1118" y2="64.5" stroke="#ed1c24" stroke-width="1" stroke-linecap="butt" shape-rendering="crispEdges"></line>
<line x1="684" y1="324" x2="870" y2="692" stroke="#ed1c24" stroke-width="1" stroke-linecap="butt" shape-rendering="crispEdges"></line>
<line x1="1239" y1="106" x2="1002" y2="524" stroke="#ed1c24" stroke-width="1" stroke-linecap="butt" shape-rendering="crispEdges"></line>
<line x1="209.5" y1="429" x2="218" y2="520" stroke="#fff200" stroke-width="5" stroke-linecap="butt"></line>
<line x1="731" y1="578" x2="874" y2="549" stroke="#fff200" stroke-width="5" stroke-linecap="round"></line>
<line x1="732" y1="610" x2="873" y2="711" stroke="#fff200" stroke-width="5" stroke-linecap="round"></line>
</svg>

</body></html>
